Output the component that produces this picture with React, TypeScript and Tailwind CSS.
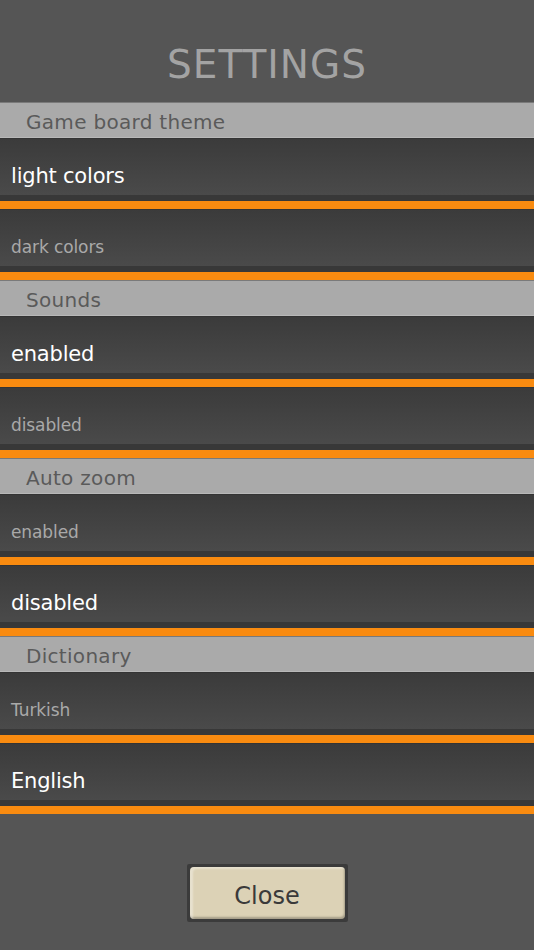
import React from "react";

const font = { fontFamily: '"DejaVu Sans", "Noto Sans", sans-serif' };

type Opt = { label: string; selected: boolean };
const groups: { title: string; options: Opt[] }[] = [
  { title: "Game board theme", options: [ { label: "light colors", selected: true }, { label: "dark colors", selected: false } ] },
  { title: "Sounds", options: [ { label: "enabled", selected: true }, { label: "disabled", selected: false } ] },
  { title: "Auto zoom", options: [ { label: "enabled", selected: false }, { label: "disabled", selected: true } ] },
  { title: "Dictionary", options: [ { label: "Turkish", selected: false }, { label: "English", selected: true } ] },
];

function Row({ opt }: { opt: Opt }) {
  return (
    <div className="flex flex-col">
      <div className="h-[57px] border-t border-[#343434] bg-gradient-to-b from-[#3b3b3b] to-[#4a4a4a] flex items-center pt-[20px] pl-[11px]">
        <span
          className={opt.selected ? "text-[21px] text-white tracking-[-0.2px]" : "text-[17px] text-[#a9a9a9] tracking-[-0.1px]"}
        >
          {opt.label}
        </span>
      </div>
      <div className="h-[6px] bg-[#383838]" />
      <div className="h-[8px] bg-[#f98b10]" />
    </div>
  );
}

export default function App() {
  return (
    <div className="w-[534px] h-[950px] bg-[#555555] flex flex-col overflow-hidden" style={font}>
      <div className="h-[102px] flex items-center justify-center pt-[28px]">
        <h1 className="text-[39px] text-[#a3a3a3] tracking-[1px]">SETTINGS</h1>
      </div>
      {groups.map((g) => (
        <div key={g.title} className="flex flex-col">
          <div className="h-[36px] bg-[#aaaaaa] border-t border-[#7a7a7a] border-b border-b-[#b8b8b8] flex items-center pl-[26px] pt-[4px]">
            <span className="text-[20px] text-[#5a5a5a] tracking-[0.3px]">{g.title}</span>
          </div>
          {g.options.map((o) => (
            <Row key={o.label} opt={o} />
          ))}
        </div>
      ))}
      <div className="flex justify-center mt-[50px]">
        <button className="w-[161px] h-[58px] bg-[#3b3b3b] p-[3px] rounded-[2px]">
          <div className="w-full h-full rounded-[4px] bg-[#dcd2b6] shadow-[inset_3px_2px_2px_rgba(255,255,255,0.35),inset_-1px_-2px_2px_rgba(0,0,0,0.25)] flex items-center justify-center pt-[5px]">
            <span className="text-[24px] text-[#3a3a3a]">Close</span>
          </div>
        </button>
      </div>
    </div>
  );
}
